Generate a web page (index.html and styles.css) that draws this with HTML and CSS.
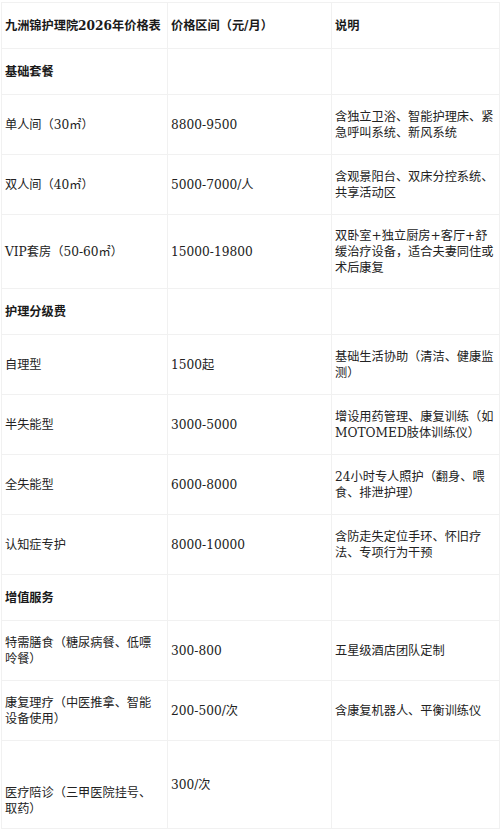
FILE: index.html
```html
<!DOCTYPE html>
<html lang="zh-CN">
<head>
<meta charset="utf-8">
<title>九洲锦护理院2026年价格表</title>
<link rel="stylesheet" href="styles.css">
</head>
<body>
<table class="price-table">
  <colgroup>
    <col class="c1">
    <col class="c2">
    <col class="c3">
  </colgroup>
  <thead>
    <tr class="row-head">
      <th class="title">九洲锦护理院2026年价格表</th>
      <th>价格区间（元/月）</th>
      <th>说明</th>
    </tr>
  </thead>
  <tbody>
    <tr class="row-section">
      <td class="strong">基础套餐</td><td></td><td></td>
    </tr>
    <tr class="row-2">
      <td>单人间（30㎡）</td><td>8800-9500</td><td>含独立卫浴、智能护理床、紧急呼叫系统、新风系统</td>
    </tr>
    <tr class="row-2">
      <td>双人间（40㎡）</td><td>5000-7000/人</td><td>含观景阳台、双床分控系统、共享活动区</td>
    </tr>
    <tr class="row-3">
      <td>VIP套房（50-60㎡）</td><td>15000-19800</td><td>双卧室+独立厨房+客厅+舒缓治疗设备，适合夫妻同住或术后康复</td>
    </tr>
    <tr class="row-section">
      <td class="strong">护理分级费</td><td></td><td></td>
    </tr>
    <tr class="row-2">
      <td>自理型</td><td>1500起</td><td>基础生活协助（清洁、健康监测）</td>
    </tr>
    <tr class="row-2">
      <td>半失能型</td><td>3000-5000</td><td>增设用药管理、康复训练（如MOTOMED肢体训练仪）</td>
    </tr>
    <tr class="row-2">
      <td>全失能型</td><td>6000-8000</td><td>24小时专人照护（翻身、喂食、排泄护理）</td>
    </tr>
    <tr class="row-2">
      <td>认知症专护</td><td>8000-10000</td><td>含防走失定位手环、怀旧疗法、专项行为干预</td>
    </tr>
    <tr class="row-section">
      <td class="strong">增值服务</td><td></td><td></td>
    </tr>
    <tr class="row-2">
      <td>特需膳食（糖尿病餐、低嘌呤餐）</td><td>300-800</td><td>五星级酒店团队定制</td>
    </tr>
    <tr class="row-2">
      <td>康复理疗（中医推拿、智能设备使用）</td><td>200-500/次</td><td>含康复机器人、平衡训练仪</td>
    </tr>
    <tr class="row-4">
      <td><br><br>医疗陪诊（三甲医院挂号、取药）</td><td>300/次</td><td></td>
    </tr>
  </tbody>
</table>
</body>
</html>
```

FILE: styles.css
```css
html, body {
  margin: 0;
  padding: 0;
  background: #ffffff;
}

body {
  font-family: "DejaVu Serif", "Noto Sans CJK SC", serif;
  font-size: 12.2px;
  color: #222222;
}

.price-table {
  margin: 2px 0 0 1px;
  width: 498px;
  table-layout: fixed;
  border-collapse: collapse;
}

.c1 { width: 166px; }
.c2 { width: 164px; }
.c3 { width: 168px; }

.price-table th,
.price-table td {
  border: 1px solid #f1f1f1;
  padding: 0 1px 0 3px;
  line-height: 16px;
  vertical-align: middle;
  text-align: left;
  word-break: break-all;
}

.price-table td:first-child {
  padding-right: 8px;
}

.price-table .title {
  white-space: nowrap;
}

.price-table th,
.price-table .strong {
  font-weight: bold;
  color: #1a1a1a;
}

.row-head th { height: 45px; }
.row-section td { height: 45px; }
.row-2 td { height: 59px; }
.row-3 td { height: 73px; }
.row-4 td { height: 87px; }
```
